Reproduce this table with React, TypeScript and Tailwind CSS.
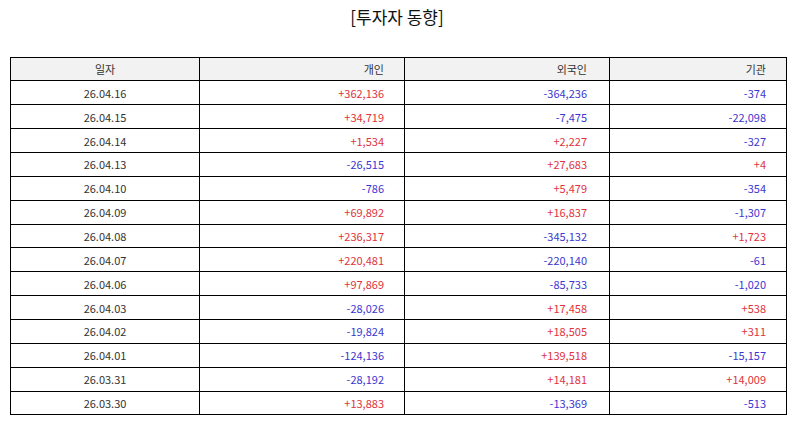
const ROWS: [string, string, string, string][] = [
  ['26.04.16', '+362,136', '-364,236', '-374'],
  ['26.04.15', '+34,719', '-7,475', '-22,098'],
  ['26.04.14', '+1,534', '+2,227', '-327'],
  ['26.04.13', '-26,515', '+27,683', '+4'],
  ['26.04.10', '-786', '+5,479', '-354'],
  ['26.04.09', '+69,892', '+16,837', '-1,307'],
  ['26.04.08', '+236,317', '-345,132', '+1,723'],
  ['26.04.07', '+220,481', '-220,140', '-61'],
  ['26.04.06', '+97,869', '-85,733', '-1,020'],
  ['26.04.03', '-28,026', '+17,458', '+538'],
  ['26.04.02', '-19,824', '+18,505', '+311'],
  ['26.04.01', '-124,136', '+139,518', '-15,157'],
  ['26.03.31', '-28,192', '+14,181', '+14,009'],
  ['26.03.30', '+13,883', '-13,369', '-513'],
]

function tone(value: string) {
  return value.startsWith('-') ? 'text-[#3b36d0]' : 'text-[#e0323c]'
}

export default function App() {
  return (
    <div className="h-[425px] w-[794px] bg-white font-['Noto_Sans_CJK_KR','Noto_Sans',sans-serif] text-[#333]">
      <h1 className="pt-[5px] text-center text-[17px] leading-[24px] text-[#111]">[투자자 동향]</h1>
      <div className="px-[10px] pt-[27.5px]">
        <table className="w-[776px] table-fixed border-collapse text-[11px] leading-[16px]">
          <colgroup>
            <col className="w-[189px]" />
            <col className="w-[205px]" />
            <col className="w-[205px]" />
            <col className="w-[177px]" />
          </colgroup>
          <thead>
            <tr className="h-[23.87px] bg-[#f2f2f2]">
              <th className="border border-black p-0 text-center font-normal">일자</th>
              <th className="border border-black p-0 pr-[20px] text-right font-normal">개인</th>
              <th className="border border-black p-0 pr-[22px] text-right font-normal">외국인</th>
              <th className="border border-black p-0 pr-[20px] text-right font-normal">기관</th>
            </tr>
          </thead>
          <tbody>
            {ROWS.map(([date, retail, foreign, inst]) => (
              <tr key={date} className="h-[23.87px]">
                <td className="border border-black p-0 text-center">{date}</td>
                <td className={`border border-black p-0 pr-[20px] text-right ${tone(retail)}`}>{retail}</td>
                <td className={`border border-black p-0 pr-[22px] text-right ${tone(foreign)}`}>{foreign}</td>
                <td className={`border border-black p-0 pr-[20px] text-right ${tone(inst)}`}>{inst}</td>
              </tr>
            ))}
          </tbody>
        </table>
      </div>
    </div>
  )
}
